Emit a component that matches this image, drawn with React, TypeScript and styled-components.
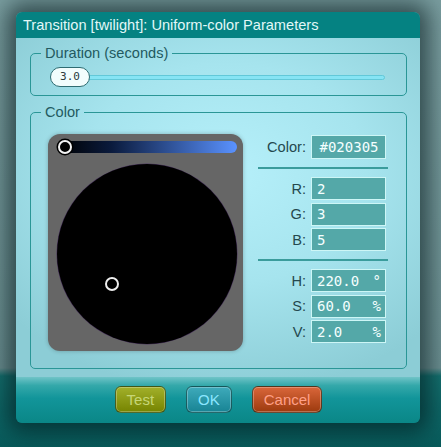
import React from "react";
import styled, { createGlobalStyle } from "styled-components";

const Global = createGlobalStyle`
  html, body { margin: 0; padding: 0; }
  body { font-family: "Liberation Sans", Arial, sans-serif; }
  * { box-sizing: border-box; }
`;

const Backdrop = styled.div`
  width: 441px;
  height: 447px;
  overflow: hidden;
  padding: 12px 21px 0 16px;
  background: linear-gradient(
    to bottom,
    #7a9ea0 0px,
    #6c9092 368px,
    #14706f 376px,
    #0c6464 420px,
    #085a5a 447px
  );
`;

const Dialog = styled.div`
  width: 404px;
  height: 411px;
  border-radius: 6px;
  overflow: hidden;
  display: flex;
  flex-direction: column;
  box-shadow: 0 0 22px 9px rgba(0, 20, 24, 0.6);
`;

const TitleBar = styled.div`
  height: 26px;
  flex: none;
  background: #058282;
  color: #e2f8f8;
  font-size: 14.6px;
  line-height: 26px;
  padding-left: 7px;
  white-space: nowrap;
`;

const Body = styled.div`
  flex: 1;
  display: flex;
  flex-direction: column;
  gap: 8px;
  padding: 7px 13px 8px 14px;
  background: radial-gradient(
    ellipse 70% 65% at 52% 40%,
    #b6f0fa 0%,
    #a6e4ee 50%,
    #8ccdd6 100%
  );
`;

const Group = styled.fieldset`
  margin: 0;
  padding: 0;
  border: 1px solid #2a9696;
  border-radius: 5px;
  min-width: 0;
`;

const Legend = styled.legend`
  margin-left: 10px;
  padding: 0 4px;
  font-size: 14.6px;
  line-height: 17px;
  color: #235a60;
`;

const DurationContent = styled.div`
  padding: 5px 21px 8px 19px;
`;

const SliderRow = styled.div`
  position: relative;
  height: 20px;
  display: flex;
  align-items: center;
`;

const Track = styled.div`
  width: 100%;
  height: 5px;
  border-radius: 3px;
  background: #86e4f4;
  border: 1px solid #62c8d8;
`;

const Thumb = styled.div`
  position: absolute;
  left: 0;
  top: 0;
  width: 40px;
  height: 20px;
  border-radius: 10px;
  background: #f2fdfd;
  border: 1px solid #2f6c72;
  font-family: "DejaVu Sans Mono", monospace;
  font-size: 11px;
  line-height: 18px;
  text-align: center;
  color: #2a3a3c;
`;

const ColorContent = styled.div`
  display: flex;
  align-items: flex-start;
  gap: 15px;
  padding: 13px 18px 17px 17px;
`;

const PickerBox = styled.div`
  width: 195px;
  height: 217px;
  flex: none;
  border-radius: 12px;
  background: #666666;
  padding: 7px 6px 7px 9px;
  display: flex;
  flex-direction: column;
  gap: 11px;
  box-shadow: 0 0 4px rgba(0, 0, 0, 0.25);
`;

const ValueBar = styled.div`
  position: relative;
  width: 180px;
  height: 12px;
  border-radius: 6px;
  background: linear-gradient(to right, #000000 0%, #0a1a3c 30%, #5a92ff 100%);
`;

const BarHandle = styled.div`
  position: absolute;
  left: 1px;
  top: -1px;
  width: 14px;
  height: 14px;
  border-radius: 50%;
  background: #000;
  border: 2px solid #f4f4f4;
  box-shadow: 0 0 0 1.5px #000;
`;

const Wheel = styled.div`
  position: relative;
  width: 180px;
  height: 180px;
  border-radius: 50%;
  background: #000;
  box-shadow: 0 0 0 0.5px rgba(60, 30, 90, 0.7);
`;

const WheelHandle = styled.div`
  position: absolute;
  left: 48px;
  top: 113px;
  width: 14px;
  height: 14px;
  border-radius: 50%;
  border: 2px solid #eeeeee;
`;

const Fields = styled.div`
  width: 130px;
  flex: none;
  margin-top: 1px;
  display: flex;
  flex-direction: column;
`;

const FieldGroup = styled.div`
  display: flex;
  flex-direction: column;
  gap: 2.5px;
`;

const Row = styled.div<{ $tall?: boolean }>`
  display: flex;
  align-items: center;
  height: ${(p) => (p.$tall ? "24px" : "23px")};
  padding-right: 2px;
`;

const Label = styled.span`
  flex: 1;
  text-align: right;
  margin-right: 5px;
  font-size: 14.6px;
  color: #24484e;
`;

const Field = styled.div<{ $center?: boolean }>`
  width: 75px;
  height: 100%;
  display: flex;
  align-items: center;
  justify-content: ${(p) => (p.$center ? "center" : "space-between")};
  padding: 0 4px 0 5px;
  background: #54a8a8;
  border: 1px solid #cdf6f6;
  font-family: "DejaVu Sans Mono", monospace;
  font-size: 14px;
  color: #f4ffff;
  white-space: nowrap;
`;

const Unit = styled.span`
  font-size: 14px;
`;

const Divider = styled.div`
  height: 2px;
  background: #3a9c9c;
  margin: 8px 0 8px;
`;

const Footer = styled.div`
  height: 47px;
  flex: none;
  display: flex;
  justify-content: center;
  align-items: center;
  gap: 20px;
  padding-left: 1px;
  padding-bottom: 2px;
  background: linear-gradient(
    to bottom,
    #70c4c8 0%,
    #34a8aa 18%,
    #12959a 45%,
    #0a8686 100%
  );
`;

const tones = {
  test: { top: "#a2b02a", bottom: "#768400", text: "#c6d676" },
  ok: { top: "#3eaabb", bottom: "#188494", text: "#8ae6ff" },
  cancel: { top: "#da663a", bottom: "#9c3a0e", text: "#ffa088" },
};

const Button = styled.button<{ $tone: keyof typeof tones }>`
  height: 27px;
  padding: 0 11px;
  border-radius: 6px;
  border: 1px solid rgba(20, 50, 40, 0.55);
  box-shadow: inset 0 0 0 1px rgba(255, 255, 255, 0.28);
  background: linear-gradient(
    to bottom,
    ${(p) => tones[p.$tone].top},
    ${(p) => tones[p.$tone].bottom}
  );
  color: ${(p) => tones[p.$tone].text};
  font-family: "Liberation Sans", Arial, sans-serif;
  font-size: 15px;
  cursor: pointer;
`;

export default function App() {
  return (
    <>
      <Global />
      <Backdrop>
        <Dialog>
          <TitleBar>Transition [twilight]: Uniform-color Parameters</TitleBar>
          <Body>
            <Group>
              <Legend>Duration (seconds)</Legend>
              <DurationContent>
                <SliderRow>
                  <Track />
                  <Thumb>3.0</Thumb>
                </SliderRow>
              </DurationContent>
            </Group>
            <Group>
              <Legend>Color</Legend>
              <ColorContent>
                <PickerBox>
                  <ValueBar>
                    <BarHandle />
                  </ValueBar>
                  <Wheel>
                    <WheelHandle />
                  </Wheel>
                </PickerBox>
                <Fields>
                  <Row $tall>
                    <Label>Color:</Label>
                    <Field $center>#020305</Field>
                  </Row>
                  <Divider />
                  <FieldGroup>
                    <Row>
                      <Label>R:</Label>
                      <Field>2</Field>
                    </Row>
                    <Row>
                      <Label>G:</Label>
                      <Field>3</Field>
                    </Row>
                    <Row>
                      <Label>B:</Label>
                      <Field>5</Field>
                    </Row>
                  </FieldGroup>
                  <Divider />
                  <FieldGroup>
                    <Row>
                      <Label>H:</Label>
                      <Field>
                        <span>220.0</span>
                        <Unit>°</Unit>
                      </Field>
                    </Row>
                    <Row>
                      <Label>S:</Label>
                      <Field>
                        <span>60.0</span>
                        <Unit>%</Unit>
                      </Field>
                    </Row>
                    <Row>
                      <Label>V:</Label>
                      <Field>
                        <span>2.0</span>
                        <Unit>%</Unit>
                      </Field>
                    </Row>
                  </FieldGroup>
                </Fields>
              </ColorContent>
            </Group>
          </Body>
          <Footer>
            <Button $tone="test">Test</Button>
            <Button $tone="ok">OK</Button>
            <Button $tone="cancel">Cancel</Button>
          </Footer>
        </Dialog>
      </Backdrop>
    </>
  );
}
